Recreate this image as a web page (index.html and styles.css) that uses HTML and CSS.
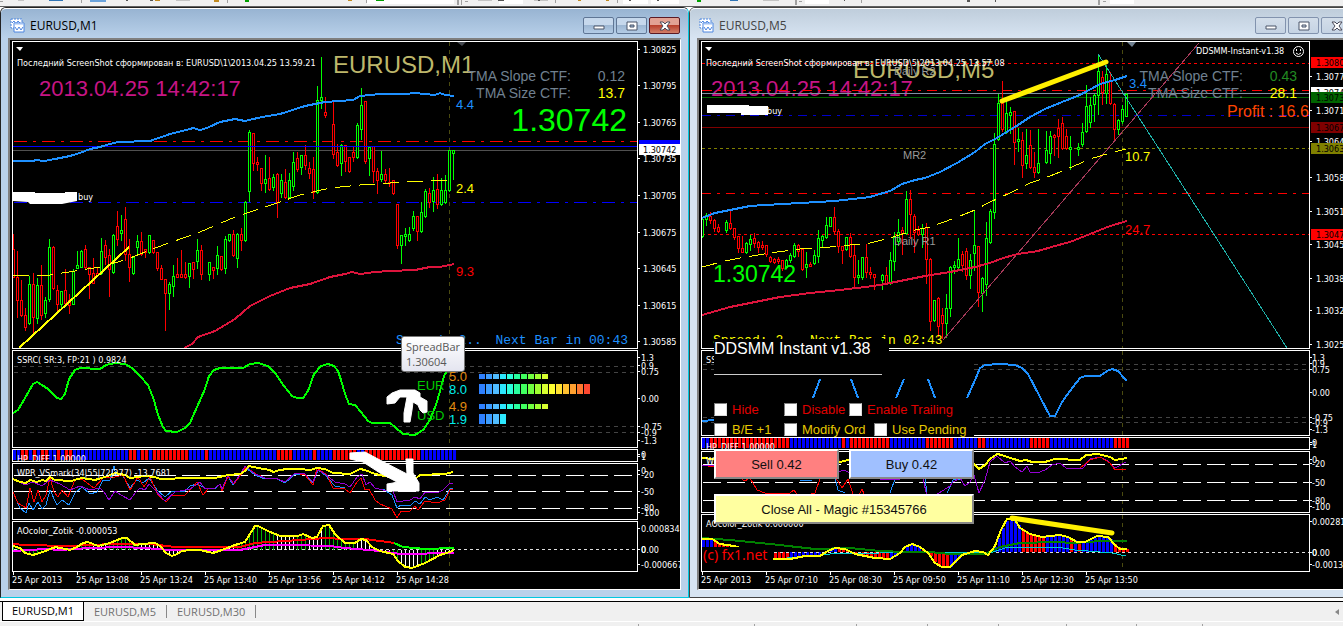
FILE: index.html
```html
<!DOCTYPE html>
<html lang="en">
<head>
    <meta charset="UTF-8">
    <meta name="viewport" content="width=device-width, initial-scale=1.0">
    <title>EURUSD,M1</title>
    <link rel="stylesheet" href="styles.css">
</head>
<body>
    <div class="toolbar">
        <svg class="toolbar-icons" aria-hidden="true">
            <path fill="#a0a0a0" d="M81 0h1v3h-1zM227 0h1v3h-1zM366 0h1v3h-1zM457 0h2v5h-2zM461 0h1v5h-1zM555 0h1v3h-1zM617 0h1v3h-1zM795 0h2v5h-2zM861 0h1v3h-1zM1098 0h2v5h-2zM0 1h3v1h-3zM465 1h3v1h-3zM799 1h3v1h-3zM1103 1h3v1h-3z"/>
            <path fill="#c4c4c4" d="M18 0h6v1h-6zM176 0h14v1h-14zM763 0h16v1h-16zM478 0h14v1h-14zM534 0h14v1h-14z"/>
            <path fill="#fff" d="M367 0h87v4h-87zM499 0h24v4h-24zM623 0h25v4h-25zM651 0h28v4h-28zM805 0h24v4h-24zM1110 0h24v4h-24z"/>
            <path fill="#2f74b5" d="M49 0h14v1h-14zM730 0h8v1h-8z"/>
            <path fill="#6aa3dc" d="M90 0h16v2h-16z"/>
            <path fill="#555" d="M126 0h2v1h-2zM150 0h3v1h-3zM498 0h6v1h-6zM538 0h2v1h-2zM629 0h2v1h-2zM657 0h2v1h-2zM844 0h1v1h-1zM967 0h3v2h-3zM995 0h1v2h-1z"/>
            <path fill="#c08a20" d="M155 0h5v1h-5zM214 0h5v2h-5zM348 0h4v1h-4zM578 0h3v1h-3zM606 0h3v1h-3z"/>
            <path fill="#00a000" d="M245 0h4v2h-4zM376 0h8v1h-8zM697 0h4v2h-4z"/>
        </svg>
    </div>

    <main class="workspace">
        <section class="window active">
            <header class="titlebar">
                <svg class="chart-icon" viewBox="0 0 16 16" aria-hidden="true">
                    <path d="M1 1h11v9H1z" fill="#fff" stroke="#4d86e0" stroke-dasharray="2 1"/>
                    <path d="M2 5l2-2 2 3 2-3 2 2" fill="none" stroke="#4d86e0"/>
                    <path d="M4 5h10v9H4z" fill="#fff" stroke="#4d86e0"/>
                    <path d="M4 6h10" stroke="#9cc0f4"/>
                    <path d="M5 9l2 3 2-3 2 3 2-3" fill="none" stroke="#4d86e0"/>
                </svg>
                <h1>EURUSD,M1</h1>
                <div class="controls">
                    <button type="button" aria-label="Minimize"><svg viewBox="0 0 12 12"><path d="M1 6h10v3H1z" fill="#fff" stroke="#4a5568"/></svg></button>
                    <button type="button" aria-label="Maximize"><svg viewBox="0 0 12 12"><path d="M1 2h10v8H1zM4 5v2h4V5z" fill="#fff" fill-rule="evenodd" stroke="#4a5568"/></svg></button>
                    <button type="button" class="close" aria-label="Close"><svg viewBox="0 0 12 12"><path d="M1 2h3l2 2 2-2h3L8 6l3 4H8L6 8l-2 2H1l3-4z" fill="#fff" stroke="#4a4a5a"/></svg></button>
                </div>
            </header>
            <div class="chart" id="m1">
                <div class="pane pane-price">
                    <svg class="plot"><g transform="translate(-13 -42)">
                        <path d="M16 47h7l-3 4z" fill="#fff"/>
                        <path d="M457 42h9l-4 4z" fill="#44484f"/>
                        <line class="now" x1="449.5" x2="449.5" y1="42" y2="348"/>
                        <line class="line" stroke="#f00" stroke-dasharray="13 6 3 6" x1="14" x2="637" y1="141.5" y2="141.5"/>
                        <line class="line" stroke="#505050" x1="13" x2="637" y1="150.5" y2="150.5"/>
                        <line class="line" stroke="#00f" stroke-dasharray="13 6 3 6" x1="14" x2="637" y1="202.5" y2="202.5"/>
                        <g class="candles"></g>
                        <line class="line" stroke="#00f" x1="13" x2="637" y1="146.5" y2="146.5"/>
                        <polyline class="line" stroke="#ff0" stroke-dasharray="16 8" points="13,275 50,275 75,271 100,267 125,260 155,248 200,232 235,217 280,202 300,195 330,188 360,185 380,184 400,182 425,181 453,180"/>
                        <polyline class="line thick" stroke="#1e90ff" points="13,161 33,161 36,160 44,161 55,159 70,156 80,153 90,149 100,147 110,144 118,142 150,141 170,134 190,129 193,128 200,130 207,128 220,122 235,119 245,121 262,117 280,114 305,106 325,102 353,100 360,96 380,94 405,94 415,93 435,95 440,93 445,95 454,96"/>
                        <polyline class="line thick" stroke="#dc143c" points="184,348 192,344 198,337 215,331 235,319 250,306 270,296 290,288 310,284 330,277 345,274 352,272 360,274 375,272 390,271 415,270 430,267 440,267 454,264"/>
                        <line class="line thick" stroke="#ff0" x1="19" y1="348" x2="129" y2="247"/>
                        <path d="M13 192h22v1h30v-1h12v9l-5 1-10 2H30l-2-2-15-1z" fill="#fff"/>
                        <text class="small" x="78" y="200">buy</text>
                        <text class="small" x="17" y="66">Последний ScreenShot сформирован в: EURUSD\1\2013.04.25 13.59.21</text>
                        <text class="clock" x="39" y="96">2013.04.25 14:42:17</text>
                        <text class="symbol" x="333" y="73">EURUSD,M1</text>
                        <g class="mid end slate">
                            <text x="571" y="81">TMA Slope CTF:</text>
                            <text x="571" y="98">TMA Size CTF:</text>
                            <text x="625" y="81">0.12</text>
                            <text x="625" y="98" fill="#ff0">13.7</text>
                        </g>
                        <text class="quote end" x="627" y="131">1.30742</text>
                        <g class="label">
                            <text x="456" y="109" fill="#1e90ff">4.4</text>
                            <text x="456" y="193" fill="#ff0">2.4</text>
                            <text x="456" y="276" fill="#f00">9.3</text>
                        </g>
                        <text class="mono" x="396" y="344" fill="#1e90ff">Spread: 2..</text>
                        <text class="mono end" x="628" y="344" fill="#1e90ff">Next Bar in 00:43</text>
                    </g></svg>
                    <svg class="scale"></svg>
                </div>
                <div class="pane pane-ssrc">
                    <svg class="plot"><g transform="translate(-13 -351)">
                        <path class="level" d="M14 366.500H637M14 372.500H637M14 426.500H637M14 432.500H637"/>
                        <line class="now" x1="449.5" x2="449.5" y1="351" y2="448"/>
                        <polyline class="line thick" stroke="#0f0" points="13,413 18,410 25,398 33,384 37,382 42,385 48,389 57,398 61,399 65,394 69,379 75,370 80,368 100,369 106,365 115,363 125,364 132,368 140,376 148,385 154,400 158,415 163,427 166,431 177,432 185,428 190,423 197,407 205,389 209,376 214,370 220,368 243,368 250,364 258,363 268,366 275,373 284,386 292,396 297,398 303,398 308,391 314,374 321,366 328,364 334,366 338,371 341,380 345,394 349,404 355,405 361,412 368,421 372,423 390,423 395,427 403,434 415,435 423,430 430,420 437,402 444,376 450,366"/>
                        <text class="small" x="17" y="363">SSRC( SR:3, FP:21 ) 0.9824</text>
                        <g class="label">
                            <text x="417" y="390" fill="#0c0">EUR</text>
                            <text x="417" y="420" fill="#0c0">USD</text>
                            <text x="449" y="381" fill="#e08a10">5.0</text>
                            <text x="449" y="394" fill="#0ee">8.0</text>
                            <text x="449" y="411" fill="#e08a10">4.9</text>
                            <text x="449" y="424" fill="#0ee">1.9</text>
                        </g>
                        <g class="meter"></g>
                    </g></svg>
                    <svg class="scale"></svg>
                </div>
                <div class="pane pane-hp">
                    <svg class="plot"><g transform="translate(-13 -450)">
                        <g class="strip"></g>
                        <text class="small" x="17" y="462">HP_DIFF 1.00000</text>
                    </g></svg>
                    <svg class="scale"></svg>
                </div>
                <div class="pane pane-wpr">
                    <svg class="plot"><g transform="translate(-13 -464)">
                        <line class="now" x1="449.5" x2="449.5" y1="464" y2="520"/>
                        <path class="band" d="M14 475.500H637M14 491.500H637M14 508.500H637"/>
                        <polyline class="line" stroke="#1e90ff" points="13,492 20,508 26,513 29,503 33,510 38,502 42,509 46,505 50,490 57,505 62,500 69,505 75,493 82,487 90,494 97,492 103,480 110,480 114,466 116,475 122,474 130,488 137,480 143,483 149,478 157,490 165,497 172,491 185,491 190,486 197,484 205,488 215,489 220,484 222,490 228,476 233,485 240,476 246,468 255,475 265,479 275,478 285,483 295,474 305,474 313,483 318,470 325,475 335,486 345,488"/>
                        <polyline class="line" stroke="#1e90ff" points="383,489 392,495 397,508 401,505 411,505 415,501 420,504 425,497 430,500 437,497 443,500 450,489 453,488"/>
                        <polyline class="line" stroke="#f00" points="13,492 18,503 26,508 30,488 34,502 38,490 42,502 46,495 50,477 54,492 58,497 62,490 68,497 75,480 82,479 94,488 104,477 115,477 123,475 130,490 138,477 144,487 150,477 158,495 166,502 172,495 185,495 193,487 197,482 203,495 208,489 215,488 220,484 222,491 228,476 234,484 240,476 246,467 256,474 265,478 275,478 285,482 295,473 305,475 313,485 317,468 327,475 333,488 345,489 350,493 357,482 361,478 365,490 369,489 375,500 380,504 392,509 397,518 401,511 410,511 415,506 418,510 425,501 437,503 445,500 450,490 453,489"/>
                        <polyline class="line" stroke="#9400d3" points="13,479 25,485 33,482 42,486 50,480 60,484 70,490 80,486 90,490 100,488 104,492 109,500 115,491 121,495 130,500 135,493 140,488 145,490 149,484 155,490 165,501 175,492 190,489 200,482 205,489 215,488 220,484 222,489 228,475 233,484 240,475 245,466 255,474 265,478 275,478 285,482 295,473 305,474 313,482 318,470 325,474 335,482 345,484 350,487 357,477 362,474 366,485 370,482 375,488 383,490 393,491 397,502 410,500 415,497 420,499 425,492 437,493 443,490 450,483 453,483"/>
                        <polyline class="line thick" stroke="#ff0" points="13,479 20,482 26,483 30,480 37,482 42,480 46,481 50,477 55,480 71,481 78,479 82,478 95,480 105,477 115,473 125,475 130,478 145,476 155,477 160,479 170,479 180,478 215,478 228,475 240,474 245,471 249,466 258,468 270,470 273,472 280,470 287,469 300,469 310,470 317,468 325,469 333,473 350,474 360,469 365,470 375,474 380,475 395,478 415,479 420,475 445,474 453,472"/>
                        <text class="small" x="17" y="476">WPR_VSmark(34|55|72|277) -13.7681</text>
                    </g></svg>
                    <svg class="scale"></svg>
                </div>
                <div class="pane pane-ao">
                    <svg class="plot"><g transform="translate(-13 -522)">
                        <line class="now" x1="449.5" x2="449.5" y1="522" y2="572"/>
                        <line class="line" stroke="#ddd" stroke-dasharray="3 3" x1="14" x2="637" y1="549.5" y2="549.5"/>
                        <g class="histogram"></g>
                        <polyline class="line thick" stroke="#f00" points="13,544 25,545 68,546 90,545 115,544 150,544 175,547 240,547 255,543 300,540 325,538 345,539 365,539 395,543"/>
                        <polyline class="line thick" stroke="#0f0" points="394,543 403,547 425,549 454,548"/>
                        <polyline class="line thick" stroke="#f0f" points="13,551 45,549 60,550 90,548 120,547 145,548 170,550 240,550 265,545 290,545 330,546 345,548 380,551 400,554 454,553"/>
                        <polyline class="line thick ao" stroke="#ff0" points="13,546 20,548 25,553 33,555 43,552 50,549 56,547 70,550 77,547 83,543 88,542 98,546 110,543 122,538 127,538 135,545 142,544 155,543 160,546 166,553 172,556 177,554 182,551 190,550 200,550 213,553 222,550 235,545 245,542 250,534 255,526 258,526 268,531 280,536 298,536 303,534 312,538 317,537 323,526 329,525 335,534 345,543 355,543 361,539 366,540 372,547 380,551 393,554 398,561 405,567 412,568 425,563 440,555 450,552 454,550"/>
                        <text class="small" x="17" y="534">AOcolor_Zotik -0.000053</text>
                    </g></svg>
                    <svg class="scale"></svg>
                </div>
                <div class="timeline">
                    <span>25 Apr 2013</span><span>25 Apr 13:08</span><span>25 Apr 13:24</span><span>25 Apr 13:40</span><span>25 Apr 13:56</span><span>25 Apr 14:12</span><span>25 Apr 14:28</span>
                </div>
                <svg class="marks" aria-hidden="true"><g transform="translate(-10 -40)" fill="#fff" stroke="#fff" stroke-linejoin="round">
                    <path d="M387 397l5-4 8-3h15l5 3v4l7 4v11l-4 1-3-3-2-5-5-3-1 8-2 12h-6v-9l3-16h-7l-5 6-8 1z"/>
                    <path d="M350 453l15-1 13 7 29 15-1-15h7v14l6 10v8h-32v-7l6-1 4-1-17-9-17-11-13-3z"/>
                </g></svg>
                <div class="tooltip">SpreadBar<br>1.30604</div>
            </div>
        </section>

        <section class="window">
            <header class="titlebar">
                <svg class="chart-icon" viewBox="0 0 16 16" aria-hidden="true">
                    <path d="M1 1h11v9H1z" fill="#fff" stroke="#4d86e0" stroke-dasharray="2 1"/>
                    <path d="M2 5l2-2 2 3 2-3 2 2" fill="none" stroke="#4d86e0"/>
                    <path d="M4 5h10v9H4z" fill="#fff" stroke="#4d86e0"/>
                    <path d="M4 6h10" stroke="#9cc0f4"/>
                    <path d="M5 9l2 3 2-3 2 3 2-3" fill="none" stroke="#4d86e0"/>
                </svg>
                <h1>EURUSD,M5</h1>
                <div class="controls">
                    <button type="button" aria-label="Minimize"><svg viewBox="0 0 12 12"><path d="M1 6h10v3H1z" fill="#fff" stroke="#4a5568"/></svg></button>
                    <button type="button" aria-label="Maximize"><svg viewBox="0 0 12 12"><path d="M1 2h10v8H1zM4 5v2h4V5z" fill="#fff" fill-rule="evenodd" stroke="#4a5568"/></svg></button>
                    <button type="button" aria-label="Close"><svg viewBox="0 0 12 12"><path d="M1 2h3l2 2 2-2h3L8 6l3 4H8L6 8l-2 2H1l3-4z" fill="#fff" stroke="#4a4a5a"/></svg></button>
                </div>
            </header>
            <div class="chart" id="m5">
                <div class="pane pane-price">
                    <svg class="plot"><g transform="translate(-702 -42)">
                        <path d="M705 47h7l-3 4z" fill="#fff"/>
                        <path d="M1127 42h9l-4 5z" fill="#708090"/>
                        <line class="now" x1="1122.5" x2="1122.5" y1="42" y2="348"/>
                        <text class="clock" x="711" y="96">2013.04.25 14:42:17</text>
                        <text class="symbol" x="853" y="78">EURUSD,M5</text>
                        <line class="line" stroke="#f00" stroke-dasharray="3 3" x1="702" x2="1309" y1="63.5" y2="63.5"/>
                        <line class="line" stroke="#f00" stroke-dasharray="10 6 3 6" x1="702" x2="1309" y1="90.5" y2="90.5"/>
                        <line class="line" stroke="#8090a0" x1="702" x2="1309" y1="93.5" y2="93.5"/>
                        <line class="line" stroke="#006400" x1="702" x2="1309" y1="97.5" y2="97.5"/>
                        <line class="line" stroke="#00c" stroke-dasharray="9 6 3 6" x1="702" x2="1309" y1="115.5" y2="115.5"/>
                        <line class="line" stroke="#800000" x1="702" x2="1309" y1="127.5" y2="127.5"/>
                        <line class="line" stroke="#808000" stroke-dasharray="3 3" x1="702" x2="1309" y1="148.5" y2="148.5"/>
                        <line class="line" stroke="#f00" stroke-dasharray="9 6 3 6" x1="702" x2="1309" y1="193.5" y2="193.5"/>
                        <line class="line" stroke="#f00" stroke-dasharray="3 3" x1="702" x2="1309" y1="234.5" y2="234.5"/>
                        <g class="mid end slate">
                            <text x="1243" y="81">TMA Slope CTF:</text>
                            <text x="1243" y="98">TMA Size CTF:</text>
                            <text x="1297" y="81" fill="#228b22">0.43</text>
                            <text x="1297" y="98" fill="#ff0">28.1</text>
                        </g>
                        <g class="candles"></g>
                        <line class="line" stroke="#a83a5a" x1="943" y1="340" x2="1199" y2="43"/>
                        <line class="line" stroke="#20b2aa" x1="1098" y1="54" x2="1287" y2="348"/>
                        <polyline class="line" stroke="#ff0" stroke-dasharray="16 8" points="702,267 725,261 740,258 770,253 800,249 830,247 870,243 890,238 915,230 930,227 955,218 975,210 990,202 1010,193 1030,183 1045,178 1065,170 1090,159 1110,153 1126,149"/>
                        <polyline class="line thick" stroke="#1e90ff" points="702,218 715,213 730,210 750,206 765,205 800,203 835,201 870,197 890,191 902,184 915,180 925,178 940,172 957,163 975,152 985,144 995,139 1015,127 1030,117 1045,109 1062,102 1080,95 1100,84 1115,80 1127,76"/>
                        <polyline class="line thick" stroke="#dc143c" points="702,315 730,307 755,302 780,297 810,293 840,290 865,287 880,285 905,280 925,276 950,272 975,267 990,263 1003,258 1018,254 1038,251 1055,246 1070,242 1090,234 1110,226 1127,221"/>
                        <path d="M1002 101L1106 62" stroke="#fff000" stroke-width="5" stroke-linecap="round"/>
                        <text class="small" x="767" y="114">buy</text>
                        <path d="M707 105h42v1h19v9h-27v-2h-34z" fill="#fff"/>
                        <text class="small" x="706" y="66">Последний ScreenShot сформирован в: EURUSD\5\2013.04.25 13.57.08</text>
                        <text class="small" x="1196" y="54">DDSMM-Instant-v1.38</text>
                        <g fill="none" stroke="#fff">
                            <circle cx="1298.5" cy="51.5" r="5"/>
                            <path d="M1296 53q2.500 3 5 0M1296.500 49v2M1300.500 49v2"/>
                        </g>
                        <text class="profit" x="1227" y="117">Profit : 16.62</text>
                        <g class="tag">
                            <text x="894" y="75">Daily R2</text>
                            <text x="903" y="159">MR2</text>
                            <text x="894" y="245">Daily R1</text>
                        </g>
                        <g class="label">
                            <text x="1129" y="88" fill="#1e90ff">3.4</text>
                            <text x="1125" y="161" fill="#ff0">10.7</text>
                            <text x="1125" y="234" fill="#f00">24.7</text>
                        </g>
                        <text class="quote low" x="713" y="282">1.30742</text>
                        <text class="mono" x="713" y="344" fill="#ff0">Spread: 2..</text>
                        <text class="mono" x="810" y="344" fill="#ff0">Next Bar in 02:43</text>
                    </g></svg>
                    <svg class="scale"></svg>
                </div>
                <div class="pane pane-ssrc">
                    <svg class="plot"><g transform="translate(-702 -351)">
                        <path class="level" d="M703 364.500H714M974 364.500H1309M703 369.500H714M974 369.500H1309M703 417.500H714M974 417.500H1309M703 422.500H714M974 422.500H1309"/>
                        <line class="now" x1="1122.5" x2="1122.5" y1="351" y2="436"/>
                        <polyline class="line thick" stroke="#1e90ff" points="702,421 714,420"/>
                        <path class="line thick" stroke="#1e90ff" d="M813 398l7-19M851 379l7 19M896 398l8-19M928 379l7 19"/>
                        <polyline class="line thick" stroke="#1e90ff" points="967,398 975,380 980,368 985,365 1000,364 1015,365 1022,368 1028,374 1040,397 1050,416 1055,416 1062,402 1070,391 1080,378 1085,376 1100,376 1107,371 1112,369 1118,371 1124,378 1127,381"/>
                        <text class="small" x="706" y="363">SSRC( SR:3, FP:21 )</text>
                    </g></svg>
                    <svg class="scale"></svg>
                </div>
                <div class="pane pane-hp">
                    <svg class="plot"><g transform="translate(-702 -438)">
                        <g class="strip"></g>
                        <text class="small" x="706" y="450">HP_DIFF 1.00000</text>
                    </g></svg>
                    <svg class="scale"></svg>
                </div>
                <div class="pane pane-wpr">
                    <svg class="plot"><g transform="translate(-702 -452)">
                        <line class="now" x1="1122.5" x2="1122.5" y1="452" y2="513"/>
                        <path class="band" d="M703 464.500H1309M703 482.500H1309M703 500.500H1309"/>
                        <path class="line" stroke="#1e90ff" d="M800 480l12 1M835 478l3 12 7 3M890 493l5-14M925 478l2 15M947 493l6-13 7-1"/>
                        <polyline class="line" stroke="#f00" points="702,465 714,467 740,478 745,481 750,478 757,490 765,493 790,493 794,490 799,497 815,493 820,479 830,470 836,478 842,488 848,479 854,497 858,497 862,489 866,499"/>
                        <polyline class="line" stroke="#9400d3" points="702,465 714,466 830,475 838,472 844,470 850,473 885,480 900,479 922,475 928,500 950,486 953,482 960,478 965,486 970,482 974,475 979,493 985,480 990,462 997,456 1005,463 1010,461 1015,467 1022,472 1027,466 1030,472 1037,473 1045,470 1052,465 1060,463 1066,468 1083,468 1090,459 1100,457 1108,461 1115,468 1126,462"/>
                        <polyline class="line" stroke="#f00" points="1080,468 1090,460 1100,457 1110,463 1115,470 1126,469"/>
                        <polyline class="line thick" stroke="#ff0" points="702,458 714,459 800,461 840,462 848,460 974,464 979,469 985,465 990,459 997,454 1002,455 1007,457 1014,459 1020,461 1026,460 1032,462 1045,462 1055,459 1080,460 1086,455 1098,454 1110,457 1115,460 1127,458"/>
                        <text class="small" x="706" y="464">WPR_VSmark(34|55|72|277) -8.0</text>
                    </g></svg>
                    <svg class="scale"></svg>
                </div>
                <div class="pane pane-ao">
                    <svg class="plot"><g transform="translate(-702 -515)">
                        <line class="now" x1="1122.5" x2="1122.5" y1="515" y2="572"/>
                        <g class="histogram"></g>
                        <line class="line" stroke="#ddd" stroke-dasharray="3 3" x1="702" x2="1309" y1="552.5" y2="552.5"/>
                        <polyline class="line" stroke="#00ced1" points="774,559 800,557 830,554 880,553 925,552 990,553 1005,548 1025,547 1057,547 1075,550 1100,552 1112,553 1126,556"/>
                        <polyline class="line thick" stroke="#008000" points="702,538 730,540 770,544 815,549 850,548 880,551 905,552 930,552 950,554 985,554 1000,547 1020,543 1055,542 1075,543 1100,541 1127,541"/>
                        <polyline class="line thick ao" stroke="#ff0" points="702,539 712,539 720,544 734,546 774,559 790,559 805,556 820,556 828,551 835,548 845,549 855,554 875,558 890,559 900,553 905,547 912,544 920,547 928,553 935,563 942,567 950,567 957,560 962,555 975,551 983,552 988,555 995,546 1001,530 1007,519 1015,520 1020,528 1030,534 1042,537 1060,535 1068,537 1077,542 1085,542 1097,536 1108,537 1115,545 1120,549 1127,549"/>
                        <path d="M1012 518L1112 533" stroke="#fff000" stroke-width="5" stroke-linecap="round"/>
                        <text class="small" x="706" y="527">AOcolor_Zotik 0.000000</text>
                        <path d="M702 547h71v20h-71z"/>
                        <text class="credit" x="703" y="560">(c) fx1.net</text>
                    </g></svg>
                    <svg class="scale"></svg>
                </div>
                <div class="timeline">
                    <span>25 Apr 2013</span><span>25 Apr 07:10</span><span>25 Apr 08:30</span><span>25 Apr 09:50</span><span>25 Apr 11:10</span><span>25 Apr 12:30</span><span>25 Apr 13:50</span>
                </div>
                <form class="trade-panel">
                    <h2>DDSMM Instant v1.38</h2>
                    <div class="rule"></div>
                    <div class="options">
                        <div class="option-row hot">
                            <label><input type="checkbox">Hide</label>
                            <label><input type="checkbox">Disable</label>
                            <label><input type="checkbox">Enable Trailing</label>
                        </div>
                        <div class="option-row gold">
                            <label><input type="checkbox">B/E +1</label>
                            <label><input type="checkbox">Modify Ord</label>
                            <label><input type="checkbox">Use Pending</label>
                        </div>
                    </div>
                    <div class="orders">
                        <button type="button" class="sell">Sell 0.42</button>
                        <button type="button" class="buy">Buy 0.42</button>
                        <button type="button" class="close-all">Close All - Magic #15345766</button>
                    </div>
                </form>
            </div>
        </section>
    </main>

    <nav class="tabs">
        <a href="#m1" class="current">EURUSD,M1</a>
        <a href="#m5">EURUSD,M5</a>
        <a href="#m30">EURUSD,M30</a>
        <svg class="scroll-left" viewBox="0 0 4 6" aria-hidden="true"><path d="M4 0v6L0 3z" fill="#888"/></svg>
    </nav>
    <footer class="statusbar">
        <svg class="status-ticks" aria-hidden="true"><path fill="#a0a0a0" d="M638 2h1v3h-1zM754 2h1v3h-1zM856 2h1v3h-1zM927 2h1v3h-1zM998 2h1v3h-1zM1066 2h1v3h-1zM1136 2h1v3h-1zM1202 2h1v3h-1z"/></svg>
    </footer>
    <script src="charts.js"></script>
</body>
</html>
```
FILE: styles.css
```css
* {
    box-sizing: border-box;
}

body {
    margin: 0;
    height: 100vh;
    display: flex;
    flex-direction: column;
    overflow: hidden;
    background-color: #f0f0f0;
    font-family: "Noto Sans", "Open Sans", sans-serif;
    font-size: 11px;
}

.toolbar {
    height: 7px;
    border-bottom: 1px solid #606060;
}

.toolbar-icons,
.status-ticks {
    display: block;
    width: 100%;
    height: 5px;
}

/* MDI area, the second window runs past the right edge */
.workspace {
    flex: 1;
    min-height: 0;
    display: grid;
    grid-template-columns: 689fr 672fr;
    width: calc(100% + 18px);
    padding-bottom: 3px;
    background-color: #fff;
}

.window {
    display: flex;
    flex-direction: column;
    min-width: 0;
    padding: 0 7px 7px;
    border: 1px solid #444;
    border-radius: 6px 6px 0 0;
    background: #d7e4f2;
}

.window.active {
    border-color: #222 #00c8e0 #00c8e0 #222;
    background: #b9d1ea;
}

.titlebar {
    display: flex;
    align-items: center;
    height: 30px;
    flex: none;
    margin: 0 -7px;
    padding: 4px 8px 0 9px;
    border-top: 1px solid #fff;
    border-radius: 5px 5px 0 0;
    background: linear-gradient(#bfcddb, #d7e4f2);
}

.active .titlebar {
    background: linear-gradient(#98b4d2, #b9d1ea);
}

.chart-icon {
    width: 16px;
    height: 16px;
}

.titlebar h1 {
    flex: 1;
    margin: 0 0 0 4px;
    font-size: 12px;
    font-weight: normal;
    line-height: 16px;
    font-family: "Open Sans", sans-serif;
    color: #444;
}

.active .titlebar h1 {
    color: #000;
}

.controls {
    display: flex;
    gap: 2px;
}

.controls button {
    display: flex;
    align-items: center;
    justify-content: center;
    width: 31px;
    height: 17px;
    padding: 0;
    border: 1px solid #8293ae;
    border-radius: 2px;
    background: linear-gradient(#d3deea, #c5d3e3);
}

.controls svg {
    width: 12px;
    height: 12px;
}

.active .controls button {
    border-color: #5f7695;
    background: linear-gradient(#c6d8ec 50%, #9db7d3 50%, #b4cce6);
}

.active .controls .close {
    border-color: #5c1a24;
    background: linear-gradient(#e2a294 50%, #b8402c 50%, #d2806a);
}

.chart {
    position: relative;
    flex: 1;
    min-height: 0;
    display: flex;
    flex-direction: column;
    gap: 1px;
    padding: 1px 0 0 2px;
    border-style: solid;
    border-width: 2px 1px 1px 2px;
    border-color: #808080 #fff #fff #808080;
    background-color: #000;
    overflow: hidden;
}

.pane {
    display: flex;
    flex: none;
}

.pane-price {
    flex: 1;
    min-height: 0;
}

.pane-ssrc { height: 98px; }
.pane-hp { height: 13px; }
.pane-wpr { height: 57px; }
.pane-ao { height: 51px; }

#m5 .pane-ssrc { height: 86px; }
#m5 .pane-wpr { height: 62px; }
#m5 .pane-ao { height: 58px; }

.plot {
    flex: 1;
    min-width: 0;
    height: 100%;
    border: 1px solid #fff;
    overflow: hidden;
}

.scale {
    width: 42px;
    height: 100%;
    overflow: visible;
}

.timeline {
    display: flex;
    height: 17px;
    flex: none;
    margin-top: -1px;
    font-family: "DejaVu Sans Condensed", "Noto Sans", sans-serif;
    font-size: 9px;
    line-height: 17px;
    color: #fff;
}

.timeline span {
    flex: 0 0 64px;
    white-space: nowrap;
    background: linear-gradient(#fff, #fff) 1px 0 / 1px 3px no-repeat;
}

/* chart drawing */
.line {
    fill: none;
    stroke-width: 1;
    shape-rendering: crispEdges;
}

.line.thick {
    stroke-width: 2;
}

.now,
.level,
.band {
    fill: none;
    stroke: #4a4a10;
    stroke-dasharray: 4 4;
    shape-rendering: crispEdges;
}

.level {
    stroke: #444;
}

.band {
    stroke: #fff;
    stroke-dasharray: 18 6;
}

.candles,
.strip,
.histogram {
    shape-rendering: crispEdges;
}

text {
    font-family: "Liberation Sans", Arial, sans-serif;
    fill: #fff;
}

text[fill="#f00"] { fill: #f00; }
text[fill="#ff0"] { fill: #ff0; }
text[fill="#0c0"] { fill: #0c0; }
text[fill="#0ee"] { fill: #0ee; }
text[fill="#000"] { fill: #000; }
text[fill="#1e90ff"] { fill: #1e90ff; }
text[fill="#e08a10"] { fill: #e08a10; }

.small {
    font-family: "DejaVu Sans Condensed", "Noto Sans", sans-serif;
    font-size: 9px;
}

.clock {
    font-size: 22px;
    fill: #c71585;
}

.symbol {
    font-size: 24px;
    fill: #bdb76b;
}

.mid {
    font-size: 14px;
}

.slate text:not([fill]) {
    fill: #708090;
}

.slate text[fill="#228b22"] {
    fill: #228b22;
}

.end,
.end text {
    text-anchor: end;
}

.quote {
    font-size: 32px;
    fill: #0f0;
}

.quote.low {
    font-size: 23px;
}

.label text {
    font-size: 13px;
}

.mono {
    font-family: "Liberation Mono", "Courier New", monospace;
    font-size: 13px;
}

.profit {
    font-size: 16px;
    fill: #ff4500;
}

.tag text {
    font-size: 11px;
    fill: #999;
}

.credit {
    font-family: "Noto Sans", sans-serif;
    font-size: 14px;
    fill: #f00;
}

/* things lying over the chart */
.marks {
    position: absolute;
    inset: 0;
    width: 100%;
    height: 100%;
    pointer-events: none;
}

.tooltip {
    position: absolute;
    left: 391px;
    top: 296px;
    padding: 2px 4px;
    border: 1px solid #767676;
    border-radius: 3px;
    background: linear-gradient(#fff, #e4e5f0);
    color: #575757;
    font-family: "Open Sans", sans-serif;
    font-size: 11px;
    line-height: 15px;
}

.trade-panel {
    position: absolute;
    left: 15px;
    top: 299px;
    width: 260px;
    font-family: "Liberation Sans", Arial, sans-serif;
    font-size: 13px;
}

.trade-panel h2 {
    width: 175px;
    height: 20px;
    margin: 0;
    background-color: #000;
    color: #fff;
    font-size: 16px;
    font-weight: normal;
    line-height: 20px;
}

.rule {
    height: 20px;
    background: linear-gradient(#ccc, #ccc) 0 15px / 168px 1px no-repeat #000;
}

.options {
    margin-top: 19px;
    padding-top: 3px;
    height: 39px;
    background-color: #000;
}

.option-row {
    display: grid;
    grid-template-columns: 70px 65px 1fr;
    height: 20px;
    color: #e00000;
}

.option-row.gold {
    grid-template-columns: 70px 90px 1fr;
    color: #e6c800;
}

.option-row label {
    display: flex;
    align-items: center;
    height: 16px;
    gap: 5px;
    white-space: nowrap;
}

.option-row input {
    appearance: none;
    width: 13px;
    height: 13px;
    margin: 0;
    border: 1px solid;
    border-color: #808080 #ddd #ddd #808080;
    background-color: #fff;
}

.orders {
    display: grid;
    grid-template-columns: 1fr 1fr;
    gap: 15px 10px;
    margin-top: 12px;
}

.orders button {
    height: 30px;
    padding: 0;
    border: 2px solid;
    border-color: #fff #888 #888 #fff;
    font: inherit;
    color: #111;
}

.sell { background-color: #ff8080; }
.buy { background-color: #a0c0ff; }

.close-all {
    grid-column: span 2;
    background-color: #ffffa0;
}

.tabs {
    display: flex;
    align-items: center;
    height: 20px;
    flex: none;
    padding: 0 4px 0 2px;
    border-top: 1px solid #000;
}

.tabs a {
    padding: 0 10px;
    border-right: 1px solid #888;
    color: #707070;
    font-family: "Open Sans", sans-serif;
    font-size: 11px;
    line-height: 13px;
    text-decoration: none;
}

.tabs .current {
    align-self: stretch;
    padding: 0 9px;
    border: 1px solid #000;
    border-top: 0;
    background-color: #fff;
    color: #000;
    line-height: 17px;
}

.scroll-left {
    width: 4px;
    height: 6px;
    margin-left: auto;
}

.statusbar {
    height: 5px;
    flex: none;
    border-top: 1px solid #fff;
}
```
FILE: charts.js
```js
// candles: x, high, body top, body bottom, low, 1 = up
const candles = {
    m1: [
        [13,234,249,277,277,0],[17,251,277,300,317,0],[21,280,300,315,316,0],[25,308,315,327,330,0],[29,276,284,323,324,1],
        [33,273,284,317,333,0],[37,278,285,318,323,1],[41,265,285,315,319,0],[45,297,300,313,317,1],[49,239,247,299,301,1],
        [53,246,247,288,289,0],[57,285,290,304,311,0],[61,291,291,304,309,1],[65,269,290,303,304,0],[69,294,300,305,313,0],
        [73,269,271,304,304,1],[77,251,265,268,268,1],[81,250,251,267,267,1],[85,245,249,267,268,0],[89,267,267,274,298,0],
        [93,258,273,283,283,0],[97,267,273,275,275,0],[101,238,251,273,274,1],[105,240,245,257,264,0],[109,249,255,269,296,0],
        [113,234,235,272,273,1],[117,211,226,239,245,0],[121,215,230,233,240,1],[125,207,219,254,260,0],[129,239,254,267,281,0],
        [133,256,257,273,274,1],[137,235,241,247,253,1],[141,232,241,254,255,0],[145,249,249,252,257,0],[149,235,235,252,253,1],
        [153,240,240,252,253,0],[157,252,252,268,270,0],[161,265,268,279,279,0],[165,279,279,293,330,0],[169,282,284,293,309,1],
        [173,265,276,286,296,1],[177,258,274,277,277,0],[181,250,274,277,277,0],[185,262,274,277,278,0],[189,263,263,276,287,1],
        [193,262,262,269,278,0],[197,239,250,261,268,1],[201,245,250,274,279,0],[209,262,262,274,280,1],[213,267,267,270,278,0],
        [217,246,255,268,274,1],[221,256,256,269,270,0],[225,236,239,268,273,1],[229,234,234,240,241,1],[233,230,234,255,256,0],
        [237,233,234,258,267,1],[241,228,234,240,250,0],[245,201,202,240,241,1],[249,130,132,191,201,1],[253,133,133,163,170,0],
        [257,157,162,164,170,0],[261,168,168,183,190,0],[265,155,179,183,192,1],[269,157,178,189,190,0],[273,174,177,187,190,1],
        [277,173,174,202,217,0],[281,174,180,193,197,1],[285,169,182,197,198,0],[289,173,180,197,198,1],[293,152,162,186,190,1],
        [297,152,158,169,171,0],[301,155,155,167,174,1],[305,145,155,165,169,0],[309,162,168,173,178,0],[313,157,169,192,198,0],
        [317,86,100,192,193,1],[321,57,97,100,108,1],[325,97,112,115,117,0],[333,101,124,154,158,0],[337,144,152,165,166,0],
        [341,144,145,163,175,1],[345,145,145,161,171,0],[349,157,157,171,172,0],[353,147,152,157,161,0],[357,123,125,157,158,1],
        [361,88,105,129,139,1],[365,101,101,161,163,0],[369,147,147,158,175,1],[373,146,146,171,182,0],[377,168,171,180,193,0],
        [381,151,174,179,181,1],[385,169,174,180,182,0],[389,168,182,183,186,0],[393,180,180,193,194,0],[397,204,204,245,248,0],
        [401,235,235,245,263,1],[405,228,234,236,245,1],[409,227,234,240,241,1],[413,211,216,228,230,1],[417,216,216,231,240,0],
        [421,202,212,231,232,1],[425,189,191,216,217,1],[429,188,193,202,207,0],[433,177,190,201,211,1],[437,174,189,204,208,0],
        [441,178,190,204,205,1],[445,175,190,202,203,1],[449,150,150,190,191,1],[453,150,150,153,179,1]
    ],
    m5: [
        [702,219,219,236,237,1],[706,213,215,219,225,1],[710,212,216,220,223,0],[714,219,220,228,231,0],[718,224,227,231,232,0],
        [726,220,222,230,232,1],[730,211,223,228,229,0],[734,228,228,237,239,0],[738,236,236,248,252,0],[742,236,248,252,252,0],
        [746,242,243,252,253,1],[750,235,239,244,250,1],[754,233,238,243,247,0],[758,241,242,247,252,0],[762,241,245,247,249,0],
        [766,245,245,254,256,0],[770,256,257,261,262,0],[774,258,259,262,263,0],[778,257,259,261,263,0],[782,260,260,268,270,0],
        [786,259,260,267,268,1],[790,253,255,260,262,1],[794,243,245,256,257,1],[798,244,245,251,256,0],[802,248,249,269,270,0],
        [806,252,264,267,277,1],[810,262,264,266,266,0],[814,250,255,263,264,1],[818,230,238,256,262,1],[822,235,236,240,246,1],
        [826,217,225,237,238,1],[830,217,217,226,226,1],[834,207,217,231,234,0],[838,229,231,246,252,0],[842,246,246,250,263,0],
        [846,237,237,249,250,1],[850,233,237,256,257,0],[854,245,255,277,288,0],[858,260,275,277,283,1],[862,257,257,277,279,1],
        [866,244,257,272,277,0],[870,267,272,274,278,0],[874,274,274,277,289,0],[882,274,275,280,289,1],[886,267,275,283,284,0],
        [890,252,260,283,284,1],[894,232,237,261,270,1],[898,219,232,241,245,1],[902,227,230,233,254,0],[906,191,199,233,234,1],
        [910,190,199,214,238,0],[914,214,216,232,252,0],[918,226,230,234,235,0],[922,224,228,234,247,1],[926,223,227,259,283,0],
        [930,258,259,321,330,0],[934,300,300,320,321,1],[938,297,298,326,336,0],[942,308,315,323,338,0],[946,294,308,323,337,1],
        [950,266,267,308,316,1],[954,261,265,267,273,1],[958,238,259,267,268,1],[962,251,254,265,271,0],[966,248,251,275,279,0],
        [970,254,260,275,288,1],[974,210,245,253,270,1],[978,246,246,292,306,0],[982,277,278,293,311,1],[986,222,238,284,295,1],
        [990,209,211,242,243,1],[994,133,144,212,218,1],[998,94,103,139,140,1],[1002,81,103,129,131,0],[1006,101,113,132,133,1],
        [1010,107,112,115,133,1],[1014,111,111,142,164,0],[1018,128,139,141,151,1],[1022,132,140,165,177,0],[1026,129,155,163,168,1],
        [1030,130,145,167,168,0],[1034,152,167,172,177,0],[1038,129,163,172,173,1],[1046,131,150,162,163,1],[1050,131,136,153,163,1],
        [1054,134,135,137,155,0],[1058,119,128,136,157,0],[1062,117,123,148,149,0],[1066,129,136,148,149,0],[1070,136,147,149,169,1],
        [1078,143,147,149,155,1],[1082,123,132,144,146,1],[1086,85,106,131,132,1],[1090,97,105,122,127,1],[1094,94,95,104,121,1],
        [1098,54,71,95,114,1],[1102,71,77,92,104,0],[1106,65,74,93,103,1],[1110,72,80,103,104,0],[1114,103,104,129,140,0],
        [1118,119,120,129,134,1],[1122,105,109,121,123,1],[1126,93,94,116,116,1]
    ]
};

// runs of blue / red bars, 4px each
const strips = {
    m1: { x: 13, y: 450, runs: "b2 r2 b1 r1 b1 r2 b2 r1 b1 r2 b14 r2 b1 r2 b1 r9 b4 r1 b17 r4 b5 r1 b4 r6 b2 r14 b9" },
    m5: { x: 702, y: 438, runs: "b2 r20 b13 r1 b1 r10 b9 r7 b6 r2 b11 r5 b16 r4" }
};

const histograms = {
    m1: { x: 13, zero: 550, width: 1, runs: "g8 w6 g6 w4 g8 w10 g6 w8 g10 w5 g3 w4 g8 w9 g2 w5 g4 w7 g12" },
    m5: { x: 702, zero: 552, width: 3, runs: "b3 r19 b12 r13 b8 r7 b18 r6 b6 r1 b1 r1 b8 r4" }
};

const scales = {
    m1: {
        price: { top: 41, x: 5, labels: [["1.30825",49],["1.30795",85],["1.30765",122],["1.30735",158],["1.30705",195],["1.30675",232],["1.30645",268],["1.30615",305],["1.30585",341]],
            tags: [["",145,"#0000ff","#000",6],["1.30742",149,"#ffffff","#000",11]] },
        ssrc: { top: 350, x: 3, labels: [["1.3",357],["0.9",365],["0.75",371],["0.00",398],["-0.75",426],["-0.9",432],["-1.3",440]] },
        hp: { top: 449, x: 3, labels: [["0",454],["1",456]] },
        wpr: { top: 463, x: 3, labels: [["0",470],["-20",474],["-50",491],["-80",507],["-100",512]] },
        ao: { top: 521, x: 3, labels: [["0.000834",528],["0.00",549],["0",549],["-0.000667",564]] }
    },
    m5: {
        price: { top: 41, x: 6, labels: [["1.3077",76],["1.3071",110],["1.3064",141],["1.3058",177],["1.3051",211],["1.3045",244],["1.3038",278],["1.3032",310],["1.3025",344]],
            tags: [["1.3080",62,"#ff0000","#000",11],["1.3074",92,"#ffffff","#000",11],["1.3073",97,"#006400","#000",11],["1.3067",127,"#800000","#000",11],["1.3063",148,"#808000","#000",11],["1.3047",234,"#ff0000","#000",11]] },
        ssrc: { top: 350, x: 2, labels: [["1.3",357],["0.9",363],["0.75",369],["0.00",392],["-0.75",417],["-0.9",422],["-1.3",429]] },
        hp: { top: 437, x: 2, labels: [["0",442],["1",444]] },
        wpr: { top: 451, x: 2, labels: [["0",459],["-20",463],["-50",482],["-80",500],["-100",506]] },
        ao: { top: 514, x: 2, labels: [["0.00281",521],["0.00",552],["0",552],["-0.0013",564]] }
    }
};

const colors = { b: "#0000ff", r: "#ff0000", g: "#00b400", w: "#ffffff" };

function rect(x, y, w, h, fill) {
    return `<rect x="${x}" y="${y}" width="${w}" height="${h}" fill="${fill}"/>`;
}

function expand(runs) {
    return runs.split(" ").map(r => r[0].repeat(parseInt(r.slice(1)))).join("");
}

function drawCandles(id) {
    document.querySelector(`#${id} .candles`).innerHTML = candles[id].map(([x, h, t, b, l, up]) => {
        const color = up ? "#00ff00" : "#ff0000";
        let out = rect(x, h, 1, l - h + 1, color) + rect(x - 1, t, 3, b - t + 1, color);
        if (b - t > 1) {
            out += rect(x, t + 1, 1, b - t - 1, "#000");
        }
        return out;
    }).join("");
}

function drawStrip(id) {
    const s = strips[id];
    document.querySelector(`#${id} .strip`).innerHTML =
        [...expand(s.runs)].map((c, i) => rect(s.x + i * 4, s.y, 3, 10, colors[c])).join("");
}

// bars reach from the zero line to the yellow curve
function drawHistogram(id) {
    const h = histograms[id];
    const points = document.querySelector(`#${id} .ao`).getAttribute("points").split(" ").map(p => p.split(",").map(Number));
    const valueAt = x => {
        const i = Math.max(1, points.findIndex(p => p[0] >= x));
        const [x1, y1] = points[i - 1];
        const [x2, y2] = points[i];
        return Math.round(y1 + (y2 - y1) * (x - x1) / (x2 - x1));
    };
    document.querySelector(`#${id} .histogram`).innerHTML = [...expand(h.runs)].map((c, i) => {
        const x = h.x + i * 4;
        if (x > points[points.length - 1][0]) {
            return "";
        }
        const y = valueAt(x);
        return rect(x, Math.min(y, h.zero), h.width, Math.abs(y - h.zero), colors[c]);
    }).join("");
}

function drawScales(id) {
    for (const [pane, s] of Object.entries(scales[id])) {
        let out = s.labels.map(([label, y]) =>
            rect(0, y - s.top, 2, 1, "#fff") + `<text class="small" x="${s.x}" y="${y - s.top + 4}">${label}</text>`).join("");
        (s.tags || []).forEach(([label, y, bg, fg, h]) => {
            out += rect(1, y - s.top - 5, 42, h, bg) + `<text class="small" x="${s.x}" y="${y - s.top + 4}" fill="${fg}">${label}</text>`;
        });
        document.querySelector(`#${id} .pane-${pane} .scale`).innerHTML = out;
    }
}

function drawMeter() {
    const ramp = ["#2e80ff","#3c9cff","#50bcff","#2ce8ff","#2cffdc","#28ffa0","#40ff60","#70ff40","#a0ff30","#d8ff30","#ffff30","#ffe030","#ffc030","#ffa030","#ff7830","#ff4830"];
    const rows = [[374, 5, 10], [384, 10, 16], [404, 5, 10], [414, 10, 4]];
    document.querySelector("#m1 .meter").innerHTML = rows.map(([y, h, n]) =>
        ramp.slice(0, n).map((c, i) => rect(479 + i * 7, y, 6, h, c)).join("")).join("");
}

["m1", "m5"].forEach(id => {
    drawCandles(id);
    drawStrip(id);
    drawHistogram(id);
    drawScales(id);
});
drawMeter();
```
